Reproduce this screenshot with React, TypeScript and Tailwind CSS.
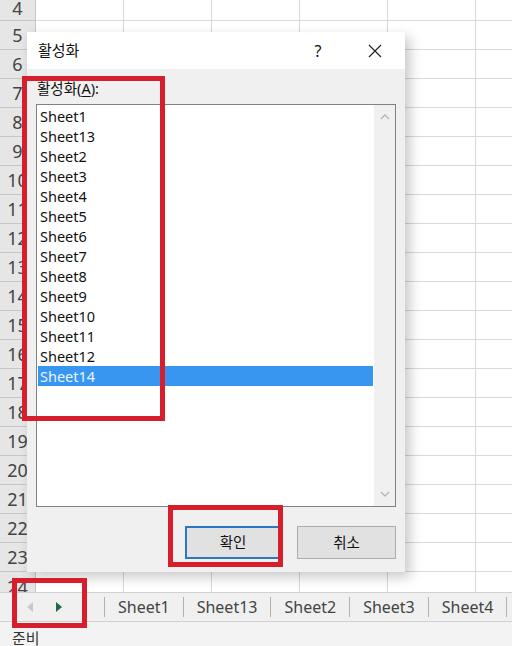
import React from 'react';

const FONT = '"Noto Sans", "Noto Sans CJK KR", sans-serif';

const sheetList = [
  'Sheet1', 'Sheet13', 'Sheet2', 'Sheet3', 'Sheet4', 'Sheet5', 'Sheet6',
  'Sheet7', 'Sheet8', 'Sheet9', 'Sheet10', 'Sheet11', 'Sheet12', 'Sheet14',
];

const tabs = ['Sheet1', 'Sheet13', 'Sheet2', 'Sheet3', 'Sheet4'];

// row 4 is cut at the top, row 24 at the bottom
const rows = Array.from({ length: 21 }, (_, i) => i + 4);

const GridRow: React.FC<{ n: number }> = ({ n }) => {
  const h = n === 4 ? 'h-[21px]' : n === 24 ? 'h-[21px]' : 'h-[29px]';
  return (
    <div className={`flex shrink-0 w-max ${h}`}>
      <div className={`w-[36px] shrink-0 h-full flex justify-center bg-[#e6e6e6] border-r border-b border-[#c6c6c6] text-[18px] text-[#444] leading-none ${n === 4 ? 'items-end pb-[3px]' : n === 24 ? 'items-start pt-[6px]' : 'items-center'}`}>
        {n}
      </div>
      {[0, 1, 2, 3, 4, 5].map((c) => (
        <div key={c} className="w-[88px] h-full shrink-0 border-r border-b border-[#d9d9d9]" />
      ))}
    </div>
  );
};

const Dialog: React.FC = () => (
  <div className="absolute left-[27px] top-[32px] w-[378px] h-[540px] flex flex-col bg-[#f0f0f0] shadow-[5px_5px_12px_rgba(0,0,0,0.22)]">
    {/* title bar */}
    <div className="h-[37px] shrink-0 bg-white flex items-center pl-[11px] text-[15px] text-[#111]">
      <span className="flex-1">활성화</span>
      <span className="w-[20px] text-center text-[16px] mr-[39px]">?</span>
      <svg width="16" height="16" viewBox="0 0 16 16" className="mr-[22px]">
        <path d="M2 2 L14 14 M14 2 L2 14" stroke="#222" strokeWidth="1.2" fill="none" />
      </svg>
    </div>

    {/* body */}
    <div className="flex-1 flex flex-col px-[9px] pt-[9px]">
      <div className="text-[14.5px] text-[#111] leading-[20px] h-[26px] pl-[1px]">
        활성화(<span className="underline underline-offset-2">A</span>):
      </div>
      <div className="h-[403px] flex bg-white border border-[#828282]">
        <div className="flex-1 flex flex-col p-[1px]">
          {sheetList.map((s) => (
            <div
              key={s}
              className={`h-[20px] leading-[20px] pl-[2px] text-[14.5px] ${s === 'Sheet14' ? 'bg-[#3996f0] text-[#eaf4ff]' : 'text-[#111]'}`}
            >
              {s}
            </div>
          ))}
        </div>
        <div className="w-[21px] bg-[#f0f0f0] flex flex-col items-center justify-between py-[9px]">
          <svg width="10" height="6" viewBox="0 0 10 6">
            <path d="M1 5 L5 1 L9 5" stroke="#b5b5b5" strokeWidth="1.3" fill="none" />
          </svg>
          <svg width="10" height="6" viewBox="0 0 10 6">
            <path d="M1 1 L5 5 L9 1" stroke="#b5b5b5" strokeWidth="1.3" fill="none" />
          </svg>
        </div>
      </div>
      <div className="flex justify-end gap-[16px] mt-[19px]">
        <button className="w-[96px] h-[33px] bg-[#e1e1e1] border-2 border-[#2a78c4] text-[14.5px] text-[#111]">
          확인
        </button>
        <button className="w-[99px] h-[33px] bg-[#e1e1e1] border border-[#adadad] text-[14.5px] text-[#111]">
          취소
        </button>
      </div>
    </div>
  </div>
);

const App: React.FC = () => {
  return (
    <div className="relative w-[512px] h-[646px] overflow-hidden bg-white flex flex-col" style={{ fontFamily: FONT }}>
      {/* worksheet grid */}
      <div className="h-[592px] shrink-0 flex flex-col overflow-hidden">
        {rows.map((n) => (
          <GridRow key={n} n={n} />
        ))}
      </div>

      {/* sheet tabs */}
      <div className="h-[30px] shrink-0 flex items-center bg-[#f0f0f0] border-t border-b border-[#d0d0d0]">
        <div className="w-[104px] shrink-0 h-full flex items-center">
          <span className="ml-[27px] w-0 h-0 border-y-[5px] border-y-transparent border-r-[6px] border-r-[#c8c8c8]" />
          <span className="ml-[23px] w-0 h-0 border-y-[5px] border-y-transparent border-l-[6px] border-l-[#1e6b45]" />
        </div>
        {tabs.map((t) => (
          <div key={t} className="h-[20px] shrink-0 flex items-center border-l border-[#b0b0b0] px-[13px] text-[16px] text-[#444]">
            {t}
          </div>
        ))}
        <div className="h-[20px] border-l border-[#b0b0b0]" />
      </div>

      {/* status bar */}
      <div className="flex-1 bg-[#f3f3f3] pl-[12px] text-[15px] text-[#333] leading-[22px] pt-[5px]">준비</div>

      <Dialog />

      {/* annotation boxes */}
      <div className="absolute left-[22px] top-[76px] w-[143px] h-[345px] border-[5px] border-[#d61f2c]" />
      <div className="absolute left-[168px] top-[505px] w-[115px] h-[62px] border-[5px] border-[#d61f2c]" />
      <div className="absolute left-[12px] top-[578px] w-[75px] h-[50px] border-[5px] border-[#d61f2c]" />
    </div>
  );
};

export default App;
